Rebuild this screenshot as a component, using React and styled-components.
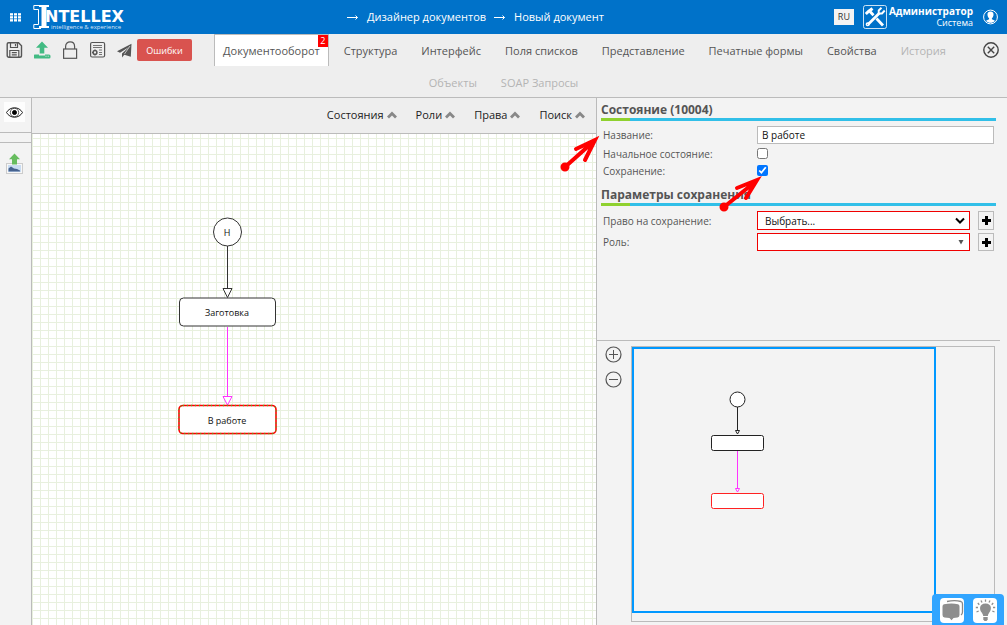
import styled, { createGlobalStyle } from "styled-components";

const GlobalStyle = createGlobalStyle`
  * {
    box-sizing: border-box;
  }
  body {
    margin: 0;
    font-family: "Open Sans", "Noto Sans", sans-serif;
    color: #555;
    background-color: #f3f3f3;
  }
  button, input, select {
    font-family: inherit;
  }
`;

const Page = styled.div`
  position: relative;
  display: flex;
  flex-direction: column;
  height: 100vh;
  overflow: hidden;
`;

const TopBar = styled.header`
  display: flex;
  align-items: center;
  height: 34px;
  padding: 0 9px 0 10px;
  color: #fff;
  background-color: #0072c9;
`;
const IconButton = styled.button`
  display: flex;
  padding: 0;
  border: none;
  color: inherit;
  background: none;
  cursor: pointer;
`;
const Logo = styled.a`
  display: flex;
  margin-left: 12px;
`;
const Crumbs = styled.nav`
  display: flex;
  flex: 1;
  justify-content: center;
  gap: 8px;
  padding-right: 10px;
  font-size: 11px;
  font-weight: 500;
  line-height: 16px;
  a {
    color: inherit;
    text-decoration: none;
  }
`;
const Lang = styled.button`
  width: 20px;
  height: 16px;
  margin-right: 9px;
  padding: 0;
  border: none;
  color: #333;
  background-color: #f3f3f3;
  font-size: 9px;
  line-height: 14px;
`;
const User = styled.div`
  margin: 0 10px 0 2px;
  text-align: right;
  font-size: 9px;
  line-height: 12px;
  strong {
    display: block;
    font-size: 10px;
  }
`;

const Toolbar = styled.div`
  height: 64px;
  border-bottom: 1px solid #bbb;
  background-color: #eee;
`;
const ToolbarRow = styled.div`
  display: flex;
  align-items: flex-start;
  justify-content: center;
  height: 32px;
`;
const Tools = styled.div`
  display: flex;
  align-items: center;
  height: 32px;
  padding-left: 6px;
  gap: 11px;
  color: #555;
`;
const ErrorsButton = styled.button`
  width: 55px;
  height: 22px;
  margin-left: -7px;
  padding: 0;
  border: none;
  border-radius: 2px;
  color: #fff;
  background-color: #d9534f;
  font-size: 9px;
`;
const Tabs = styled.nav`
  display: flex;
  flex: 1;
  justify-content: center;
  gap: 6px;
`;
const Tab = styled.a`
  position: relative;
  height: 32px;
  padding: 0 8px;
  border: 1px solid ${(props) => (props.$active ? "#bbb" : "transparent")};
  border-bottom: none;
  color: ${(props) => (props.$muted ? "#b4b4b4" : "#555")};
  background-color: ${(props) => (props.$active ? "#fff" : "transparent")};
  font-size: 11px;
  line-height: 32px;
  text-decoration: none;
  white-space: nowrap;
`;
const Badge = styled.span`
  position: absolute;
  top: 0;
  right: 0;
  width: 10px;
  height: 12px;
  color: #fff;
  background-color: #f00;
  font-size: 9px;
  line-height: 12px;
  text-align: center;
`;
const CloseBox = styled.div`
  padding: 8px 8px 0 6px;
`;

const Workspace = styled.main`
  display: grid;
  flex: 1;
  grid-template-columns: 32px minmax(0, 564fr) minmax(0, 411fr);
  min-height: 0;
`;
const Rail = styled.aside`
  border-right: 1px solid #bbb;
  background-color: #f3f3f3;
`;
const RailCell = styled.div`
  display: flex;
  justify-content: center;
  height: ${(props) => props.$height}px;
  padding: ${(props) => props.$top || 4}px 3px 0 0;
  border-bottom: ${(props) => (props.$line ? "1px solid #bbb" : "none")};
`;
const EyeTile = styled(IconButton)`
  align-items: center;
  justify-content: center;
  width: 21px;
  height: 20px;
  background-color: #fdfdfd;
`;

const Editor = styled.section`
  display: flex;
  flex-direction: column;
  min-height: 0;
`;
const Filters = styled.div`
  display: flex;
  align-items: center;
  justify-content: flex-end;
  gap: 19px;
  height: 36px;
  padding: 0 11px 2px 0;
  border-bottom: 1px solid #bbb;
  background-color: #eee;
`;
const FilterButton = styled(IconButton)`
  align-items: center;
  gap: 3px;
  color: #222;
  font-size: 11px;
  font-weight: 500;
  line-height: 16px;
`;
const Canvas = styled.div`
  flex: 1;
  min-height: 0;
  overflow: hidden;
  background-color: #fff;
  background-image: linear-gradient(to right, #e8f0de 1px, transparent 1px),
    linear-gradient(to bottom, #e8f0de 1px, transparent 1px);
  background-position: 0 4px;
  background-size: 8px 8px;
  svg {
    display: block;
    width: 100%;
    height: 100%;
  }
  text {
    fill: #111;
    font-size: 9px;
    text-anchor: middle;
  }
`;

const Side = styled.section`
  display: grid;
  grid-template-rows: minmax(0, 243fr) minmax(0, 284fr);
  min-height: 0;
  border-left: 1px solid #bbb;
  background-color: #f3f3f3;
`;
const Props = styled.form`
  margin-right: 7px;
  padding: 4px 4px 0;
  border-bottom: 1px solid #bbb;
`;
const Title = styled.h2`
  margin: 0;
  padding-bottom: 1px;
  border-bottom: 3px solid;
  border-image: linear-gradient(to right, #8fd12f 30px, #31bfe8 30px) 1;
  font-size: 12px;
  font-weight: 700;
  line-height: 15px;
`;
const Fields = styled.div`
  display: flex;
  flex-direction: column;
  gap: ${(props) => props.$gap}px;
  padding: 5px 2px 9px;
`;
const Field = styled.div`
  display: flex;
  align-items: center;
  min-height: ${(props) => props.$height}px;
  font-size: 10px;
  line-height: 14px;
  label {
    flex: 0 0 154px;
  }
`;
const TextInput = styled.input`
  flex: 1;
  min-width: 0;
  height: 18px;
  padding: 0 4px;
  border: 1px solid #bbb;
  color: #111;
  background-color: #fff;
  font-size: 10px;
`;
const Check = styled.input`
  width: 11px;
  height: 11px;
  margin: 0;
`;
const SelectWrap = styled.div`
  position: relative;
  display: flex;
  flex: 1;
  margin-right: 8px;
  svg {
    position: absolute;
    top: 0;
    right: 5px;
    height: 100%;
    pointer-events: none;
  }
`;
const Select = styled.select`
  flex: 1;
  min-width: 0;
  height: ${(props) => props.$height}px;
  padding: 0 7px;
  appearance: none;
  border: 1px solid #f00000;
  border-radius: 0;
  color: #111;
  background-color: #fff;
  font-size: 10px;
`;
const AddButton = styled.button`
  display: flex;
  align-items: center;
  justify-content: center;
  width: 16px;
  height: ${(props) => props.$height}px;
  padding: 0;
  border: 1px solid #bbb;
  color: #000;
  background-color: #f3f3f3;
`;

const Overview = styled.div`
  display: flex;
  gap: 9px;
  padding: 5px 12px 3px 8px;
`;
const ZoomButtons = styled.div`
  display: flex;
  flex-direction: column;
  gap: 8px;
`;
const MiniMap = styled.div`
  flex: 1;
  border: 1px solid #bbb;
`;
const MiniView = styled.div`
  width: 84%;
  height: 97%;
  border: 2px solid #0098ff;
  svg {
    display: block;
    width: 100%;
    height: 100%;
  }
`;

const Annotations = styled.svg`
  position: absolute;
  top: 0;
  left: 0;
  pointer-events: none;
`;
const Dock = styled.div`
  position: absolute;
  right: 3px;
  bottom: 0;
  display: flex;
  gap: 9px;
  padding: 4px 7px 2px 8px;
  border-radius: 4px 4px 0 0;
  background-color: #31a5ff;
`;
const DockButton = styled(IconButton)`
  width: 24px;
  height: 25px;
  border-radius: 4px;
  background-color: #fff;
`;

const tabs = [
  { name: "Документооборот", active: true, count: 2 },
  { name: "Структура" },
  { name: "Интерфейс" },
  { name: "Поля списков" },
  { name: "Представление" },
  { name: "Печатные формы" },
  { name: "Свойства" },
  { name: "История", muted: true },
];
const moreTabs = ["Объекты", "SOAP Запросы"];
const filters = ["Состояния", "Роли", "Права", "Поиск"];

function LogoMark() {
  return (
    <svg width="94" height="26" viewBox="0 0 94 26" fill="#fff">
      <path d="M6 1H16V3H13.500V22H16V24H6V22H8.500V3H6Z" />
      <path d="M6 1.5H.8V5.500H5.500V20.500H.8V24.500H8" fill="none" stroke="#fff" />
      <text x="12" y="18" fontFamily="DejaVu Sans" fontSize="16" fontWeight="700">
        NTELLEX
      </text>
      <text x="18" y="25" fontSize="6" fillOpacity=".85">
        intelligence &amp; experience
      </text>
    </svg>
  );
}

function MenuIcon() {
  return (
    <svg width="11" height="9" viewBox="0 0 11 9" fill="#fff">
      {[0, 4, 8].map((x) =>
        [0, 3, 6].map((y) => (
          <rect key={x + "-" + y} x={x} y={y + 0.2} width="3" height="2.300" />
        ))
      )}
    </svg>
  );
}

function Arrow() {
  return (
    <svg width="12" height="16" viewBox="0 0 12 16" fill="none" stroke="#fff">
      <path d="M0 8.500H10.500M8.500 6.500L10.500 8.500L8.500 10.500" />
    </svg>
  );
}

function ToolsIcon() {
  return (
    <svg width="24" height="24" viewBox="0 0 24 24" fill="none" stroke="#fff">
      <rect x=".5" y=".5" width="23" height="23" rx="2" strokeOpacity=".8" />
      <path d="M7 6.500L10.500 10.300M13.500 13.500L20 20.500" strokeWidth="2.800" />
      <path d="M2.800 9L5.500 6.500L9.500 3.500" strokeWidth="3" />
      <path d="M5 19.500L16.500 8" strokeWidth="2.600" />
      <path d="M18.500 2.800L15.700 5.500V8.500H19L21.700 5.500" strokeWidth="1.900" />
      <circle cx="4.700" cy="19.300" r="1.300" strokeWidth="1.500" />
    </svg>
  );
}

function UserIcon() {
  return (
    <svg width="15" height="16" viewBox="0 0 15 16">
      <circle cx="7.500" cy="8" r="6.900" fill="none" stroke="#fff" />
      <path
        d="M7.500 2.500C5.200 2.500 4.300 4 4.500 5.900C4.700 7.400 5.300 8.600 6.100 9.200V10.300L3 11.800C5.500 14.500 9.500 14.500 12 11.800L8.900 10.300V9.200C9.700 8.600 10.300 7.400 10.500 5.900C10.700 4 9.800 2.500 7.500 2.500Z"
        fill="#fff"
      />
    </svg>
  );
}

function SaveIcon() {
  return (
    <svg width="17" height="18" viewBox="0 0 17 18" fill="none" stroke="currentColor" strokeWidth="1.400">
      <path d="M2.500 1.700H12.500L15.500 4.700V14.500Q15.500 16.300 13.700 16.300H3Q1.200 16.300 1.200 14.500V3Q1.200 1.700 2.500 1.700Z" />
      <path d="M4.500 2V6.500H11.500V2M9.500 3V5.300M3.800 16V9.500H12.800V16M5.800 11.700H10.800M5.800 13.800H10.800" strokeWidth="1.200" />
    </svg>
  );
}

function UploadIcon() {
  return (
    <svg width="18" height="18" viewBox="0 0 18 18" fill="#42bb83">
      <path d="M8 .5L14 6.800H10.300V12.500H5.700V6.800H2Z" />
      <path d="M1 13.500H5V14.500H11V13.500H15Q16.500 13.500 16.500 15V16.300Q16.500 17.500 15 17.500H1Q-.5 17.500 -.5 16.300V15Q-.5 13.500 1 13.500Z" />
      <path d="M11.500 15.200H12.500M13.700 15.200H14.700" stroke="#eee" />
    </svg>
  );
}

function LockIcon() {
  return (
    <svg width="16" height="18" viewBox="0 0 16 18" fill="none" stroke="currentColor" strokeWidth="1.200">
      <rect x=".6" y="8" width="13" height="9.300" />
      <path d="M2.600 8V5.500C2.600 -.8 11.600 -.8 11.600 5.500V8" />
    </svg>
  );
}

function FormIcon() {
  return (
    <svg width="16" height="18" viewBox="0 0 16 18" fill="none" stroke="currentColor">
      <rect x=".6" y="1.500" width="14" height="14.500" rx="1.500" strokeWidth="1.200" />
      <path d="M3 4.500H12M3 6.500H12M9 9H12M9 11.500H12M9 13.500H12" strokeOpacity=".8" />
      <circle cx="5" cy="11.500" r="1.900" strokeWidth="1.500" />
      <path d="M5 8.500V9.500M5 13.500V14.500M2 11.500H3" />
    </svg>
  );
}

function SendIcon() {
  return (
    <svg width="16" height="18" viewBox="0 0 16 18" fill="currentColor">
      <path d="M14.500 2.800L0 10.300L3 11.700L12 6L5 12.500V16.500L7.300 13.800L13.800 15.800Z" />
      <path d="M13 5L7.500 13" stroke="#eee" strokeWidth=".7" />
    </svg>
  );
}

function CloseIcon() {
  return (
    <svg width="16" height="16" viewBox="0 0 16 16" fill="none" stroke="#444" strokeWidth="1.400">
      <circle cx="8" cy="8" r="7.200" />
      <path d="M4.800 4.800L11.200 11.200M11.200 4.800L4.800 11.200" />
    </svg>
  );
}

function EyeIcon() {
  return (
    <svg width="17" height="11" viewBox="0 0 17 11" fill="none" stroke="#222">
      <path d="M.5 5.500C4 -.8 13 -.8 16.500 5.500C13 11.800 4 11.800 .5 5.500Z" />
      <circle cx="8.500" cy="5.500" r="4.200" strokeOpacity=".7" />
      <circle cx="8.500" cy="5.500" r="2" fill="#000" stroke="#000" />
    </svg>
  );
}

function ExportIcon() {
  return (
    <svg width="17" height="21" viewBox="0 0 17 21">
      <rect x=".5" y="10.500" width="16" height="10" fill="#f7f7f7" stroke="#ccc" />
      <rect x="2" y="12" width="13" height="7" fill="#c9dcf2" />
      <path d="M2.500 18.500V15.500L5 13.500L8 15.500L11 16L14 17.500V18.500Z" fill="#46628f" />
      <path d="M8.500 .5L14 6.300H11V11.500H6V6.300H3Z" fill="#67bd5f" />
    </svg>
  );
}

function Caret() {
  return (
    <svg width="10" height="8" viewBox="0 0 10 8" fill="none" stroke="#888" strokeWidth="2.800">
      <path d="M1 6.500L5 2.500L9 6.500" />
    </svg>
  );
}

function Plus() {
  return (
    <svg width="9" height="9" viewBox="0 0 9 9" stroke="#000" strokeWidth="3">
      <path d="M4.500 0V9M0 4.500H9" />
    </svg>
  );
}

function ZoomIcon({ plus }) {
  return (
    <svg width="17" height="17" viewBox="0 0 17 17" fill="none" stroke="#555">
      <circle cx="8.500" cy="8.500" r="7.500" strokeWidth="1.200" />
      <path d={plus ? "M4 8.500H13M8.500 4V13" : "M4 8.500H13"} />
    </svg>
  );
}

function ChatIcon() {
  return (
    <svg width="24" height="25" viewBox="0 0 24 25">
      <path d="M7 3.500C12 2.500 17 2.500 21 3.500Q22.500 4 22.500 6V14Q22.500 16 21 17" fill="none" stroke="#888" strokeWidth="1.300" />
      <path
        d="M4 6.300C9 5.300 14 5.300 18 6.300Q19.500 6.700 19.500 8.500V17Q19.500 19.300 17.500 19.600L13.500 20L11.500 22.300L9.500 20L4.500 19.600Q2.500 19.300 2.500 17V8.500Q2.500 6.600 4 6.300Z"
        fill="#8e8e8e"
      />
    </svg>
  );
}

function BulbIcon() {
  return (
    <svg width="24" height="25" viewBox="0 0 24 25" fill="#8e8e8e">
      <path d="M12.500 5.500C5.500 5.500 6.500 12.500 8.700 14.500Q10 16 10.200 18H14.800Q15 16 16.300 14.500C18.500 12.500 19.500 5.500 12.500 5.500Z" />
      <path d="M10.300 19H14.700V21.500L13.500 23H11.500L10.300 21.500Z" />
      <path
        d="M12.500 1.500V3.800M8 2.500L9 4.500M17 2.500L16 4.500M4.800 5L6.300 6.700M20.200 5L18.700 6.700M2.800 9.500H5M20 9.500H22.200M3.500 14L5.700 13M21.500 14L19.300 13"
        stroke="#8e8e8e"
        strokeWidth="1.300"
      />
    </svg>
  );
}

function Diagram() {
  return (
    <svg fill="#fff" stroke="#333">
      <path d="M195.500 112V155" />
      <path d="M191 154.500H200L195.500 163.500Z" />
      <path d="M195.500 193V262" stroke="#f3f" />
      <path d="M191 262.500H200L195.500 271Z" stroke="#f3f" />
      <circle cx="195.500" cy="98" r="14" />
      <rect x="147.500" y="164" width="96" height="28" rx="4" />
      <rect x="147" y="271.500" width="97" height="28" rx="4" stroke="#f00" strokeWidth="1.600" />
      <rect x="147" y="271.500" width="97" height="28" rx="4" fill="none" stroke="#4b2" strokeWidth="1.300" strokeDasharray="1 3" />
      <g stroke="none">
        <text x="195" y="102">Н</text>
        <text x="195" y="182">Заготовка</text>
        <text x="195" y="290">В работе</text>
      </g>
    </svg>
  );
}

function MiniDiagram() {
  return (
    <svg fill="#fff" stroke="#222">
      <path d="M103.500 58V82M101.500 81.500H105.500L103.500 85Z" />
      <path d="M103.500 101V139M101.500 139.500H105.500L103.500 143Z" stroke="#f3f" />
      <circle cx="103.500" cy="50.500" r="7.500" />
      <rect x="77.500" y="86.500" width="52" height="15" rx="2" />
      <rect x="77.500" y="144.500" width="52" height="15" rx="2" stroke="#f22" />
    </svg>
  );
}

function App() {
  return (
    <Page>
      <GlobalStyle />
      <TopBar>
        <IconButton aria-label="Меню">
          <MenuIcon />
        </IconButton>
        <Logo href="#">
          <LogoMark />
        </Logo>
        <Crumbs>
          <Arrow />
          <a href="#">Дизайнер документов</a>
          <Arrow />
          <a href="#">Новый документ</a>
        </Crumbs>
        <Lang>RU</Lang>
        <ToolsIcon />
        <User>
          <strong>Администратор</strong>
          Система
        </User>
        <IconButton aria-label="Профиль">
          <UserIcon />
        </IconButton>
      </TopBar>

      <Toolbar>
        <ToolbarRow>
          <Tools>
            <IconButton aria-label="Сохранить">
              <SaveIcon />
            </IconButton>
            <IconButton aria-label="Загрузить">
              <UploadIcon />
            </IconButton>
            <IconButton aria-label="Заблокировать">
              <LockIcon />
            </IconButton>
            <IconButton aria-label="Форма">
              <FormIcon />
            </IconButton>
            <IconButton aria-label="Отправить">
              <SendIcon />
            </IconButton>
            <ErrorsButton>Ошибки</ErrorsButton>
          </Tools>
          <Tabs>
            {tabs.map((tab) => (
              <Tab href="#" key={tab.name} $active={tab.active} $muted={tab.muted}>
                {tab.name}
                {tab.count && <Badge>{tab.count}</Badge>}
              </Tab>
            ))}
          </Tabs>
          <CloseBox>
            <IconButton aria-label="Закрыть">
              <CloseIcon />
            </IconButton>
          </CloseBox>
        </ToolbarRow>
        <ToolbarRow>
          <Tabs>
            {moreTabs.map((name) => (
              <Tab href="#" key={name} $muted>
                {name}
              </Tab>
            ))}
          </Tabs>
        </ToolbarRow>
      </Toolbar>

      <Workspace>
        <Rail>
          <RailCell $height={35} $line>
            <EyeTile aria-label="Просмотр">
              <EyeIcon />
            </EyeTile>
          </RailCell>
          <RailCell $height={10} $line />
          <RailCell $height={40} $top={10}>
            <IconButton aria-label="Экспорт изображения">
              <ExportIcon />
            </IconButton>
          </RailCell>
        </Rail>

        <Editor>
          <Filters>
            {filters.map((name) => (
              <FilterButton key={name}>
                {name}
                <Caret />
              </FilterButton>
            ))}
          </Filters>
          <Canvas>
            <Diagram />
          </Canvas>
        </Editor>

        <Side>
          <Props>
            <Title>Состояние (10004)</Title>
            <Fields $gap={2}>
              <Field $height={18}>
                <label htmlFor="name">Название:</label>
                <TextInput id="name" defaultValue="В работе" />
              </Field>
              <Field $height={15}>
                <label htmlFor="initial">Начальное состояние:</label>
                <Check id="initial" type="checkbox" />
              </Field>
              <Field $height={15}>
                <label htmlFor="saving">Сохранение:</label>
                <Check id="saving" type="checkbox" defaultChecked />
              </Field>
            </Fields>
            <Title>Параметры сохранения</Title>
            <Fields $gap={3}>
              <Field $height={19}>
                <label htmlFor="right">Право на сохранение:</label>
                <SelectWrap>
                  <Select id="right" $height={19}>
                    <option>Выбрать...</option>
                  </Select>
                  <svg width="10" viewBox="0 0 10 6" fill="none" stroke="#000" strokeWidth="2">
                    <path d="M1 1L5 5L9 1" />
                  </svg>
                </SelectWrap>
                <AddButton type="button" aria-label="Добавить право" $height={19}>
                  <Plus />
                </AddButton>
              </Field>
              <Field $height={18}>
                <label htmlFor="role">Роль:</label>
                <SelectWrap>
                  <Select id="role" $height={18}>
                    <option></option>
                  </Select>
                  <svg width="8" viewBox="0 0 8 6" fill="#555">
                    <path d="M1.500 1H6.500L4 5.500Z" />
                  </svg>
                </SelectWrap>
                <AddButton type="button" aria-label="Добавить роль" $height={18}>
                  <Plus />
                </AddButton>
              </Field>
            </Fields>
          </Props>
          <Overview>
            <ZoomButtons>
              <IconButton aria-label="Увеличить">
                <ZoomIcon plus />
              </IconButton>
              <IconButton aria-label="Уменьшить">
                <ZoomIcon />
              </IconButton>
            </ZoomButtons>
            <MiniMap>
              <MiniView>
                <MiniDiagram />
              </MiniView>
            </MiniMap>
          </Overview>
        </Side>
      </Workspace>

      <Annotations width="1007" height="300" fill="none" stroke="#f00" strokeWidth="4" strokeLinecap="round">
        <path d="M565 167L593 142M576 149L595 140L585 160" />
        <circle cx="565" cy="167" r="3" fill="#f00" strokeWidth="3" />
        <path d="M724 207L755 182M737 188L757 180L746 198" />
        <circle cx="724" cy="207" r="3" fill="#f00" strokeWidth="3" />
      </Annotations>

      <Dock>
        <DockButton aria-label="Чат">
          <ChatIcon />
        </DockButton>
        <DockButton aria-label="Подсказки">
          <BulbIcon />
        </DockButton>
      </Dock>
    </Page>
  );
}

export default App;
